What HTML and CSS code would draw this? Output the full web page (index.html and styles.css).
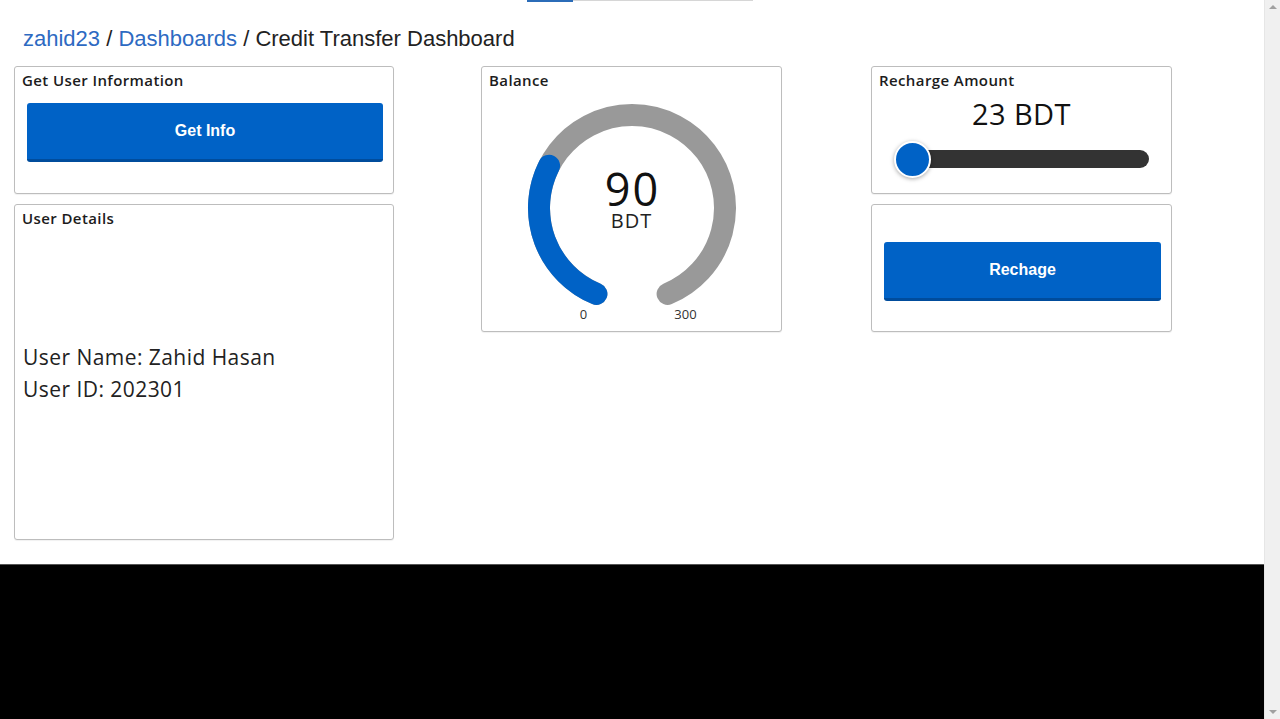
FILE: index.html
```html
<!DOCTYPE html>
<html lang="en">
<head>
<meta charset="utf-8">
<title>Credit Transfer Dashboard</title>
<link rel="stylesheet" href="styles.css">
</head>
<body>
<div class="screen">
  <div class="viewport">
    <div class="page">
      <div class="tabbar"><span class="tab tab-active"></span><span class="tab"></span></div>
      <nav class="crumbs"><a class="crumb-link">zahid23</a> / <a class="crumb-link">Dashboards</a> / <span class="crumb-current">Credit Transfer Dashboard</span></nav>
      <div class="grid">
        <div class="col col-wide">
          <section class="card card-short">
            <h2 class="card-title">Get User Information</h2>
            <button class="btn btn-info">Get Info</button>
          </section>
          <section class="card card-details">
            <h2 class="card-title">User Details</h2>
            <div class="details">
              <p>User Name: Zahid Hasan</p>
              <p>User ID: 202301</p>
            </div>
          </section>
        </div>
        <div class="col">
          <section class="card card-tall">
            <h2 class="card-title">Balance</h2>
            <div class="gauge">
              <svg class="gauge-svg" width="220" height="220" viewBox="0 0 220 220">
                <path d="M 74.4 195.9 A 93 93 0 1 1 145.6 195.9" fill="none" stroke="#999999" stroke-width="22" stroke-linecap="round"/>
                <path d="M 74.4 195.9 A 93 93 0 0 1 27.1 67.8" fill="none" stroke="#0062c6" stroke-width="22" stroke-linecap="round"/>
              </svg>
              <div class="gauge-value">
                <span class="gauge-num">90</span>
                <span class="gauge-unit">BDT</span>
              </div>
              <span class="gauge-min">0</span>
              <span class="gauge-max">300</span>
            </div>
          </section>
        </div>
        <div class="col col-last">
          <section class="card card-short">
            <h2 class="card-title">Recharge Amount</h2>
            <div class="amount">23 BDT</div>
            <div class="slider">
              <div class="slider-track"><span class="slider-thumb"></span></div>
            </div>
          </section>
          <section class="card card-short card-action">
            <button class="btn btn-recharge">Rechage</button>
          </section>
        </div>
      </div>
    </div>
    <div class="blackout"></div>
  </div>
  <div class="scrollbar">
    <span class="arrow arrow-up"></span>
    <span class="arrow arrow-down"></span>
  </div>
</div>
</body>
</html>
```
FILE: styles.css
```css
* { box-sizing: border-box; }
html, body { margin: 0; padding: 0; }
body {
  width: 1280px;
  height: 719px;
  overflow: hidden;
  font-family: "Open Sans", "Lato", sans-serif;
  color: #222;
  background: #000;
}
.screen { display: flex; width: 1280px; height: 719px; }
.viewport { width: 1264px; display: flex; flex-direction: column; }
.page { height: 564px; background: #fff; }
.blackout { flex: 1; background: #000; border-top: 1px solid #555; }

.tabbar { display: flex; margin-left: 527px; height: 2px; }
.tab { display: block; height: 1px; width: 180px; background: #d6d6d6; }
.tab-active { width: 46px; height: 2px; background: #2b6cb8; }

.crumbs {
  margin: 23px 0 0 23px;
  height: 28px;
  line-height: 28px;
  font-family: "Liberation Sans", Arial, sans-serif;
  font-size: 22px;
  color: #222;
}
.crumb-link { color: #2d6ac2; text-decoration: none; }
.crumb-current { color: #222; }

.grid { display: flex; margin-top: 13px; padding-left: 14px; gap: 87px; }
.col { display: flex; flex-direction: column; gap: 10px; width: 301px; }
.col-wide { width: 380px; }
.col-last { margin-left: 2px; }

.card {
  border: 1px solid #bdbdbd;
  border-radius: 3px;
  background: #fff;
  box-shadow: 0 1px 1px rgba(0,0,0,0.06);
  display: flex;
  flex-direction: column;
}
.card-short { height: 128px; }
.card-details { height: 336px; }
.card-tall { height: 266px; }

.card-title {
  margin: 0;
  padding: 3px 7px 0;
  height: 27px;
  line-height: 20px;
  font-size: 15px;
  letter-spacing: 0.4px;
  font-weight: 600;
  color: #1c1c1c;
}

.btn {
  border: none;
  border-bottom: 3px solid #004c9c;
  border-radius: 3px;
  background: #0062c6;
  color: #fff;
  font-family: "Liberation Sans", Arial, sans-serif;
  font-weight: 700;
  font-size: 16px;
  cursor: pointer;
}
.btn-info { margin: 9px 10px 0 12px; height: 59px; }
.card-action { justify-content: center; }
.btn-recharge { margin: 6px 10px 0 12px; height: 59px; }

.details { margin-top: 109px; padding-left: 8px; font-size: 21px; letter-spacing: 0.45px; color: #222; }
.details p { margin: 0; height: 32px; line-height: 32px; }

.gauge { position: relative; width: 220px; height: 236px; margin: 4px auto 0; }
.gauge-svg { display: block; }
.gauge-value {
  position: absolute;
  left: 0; right: 0; top: 73px;
  display: flex; flex-direction: column; align-items: center;
  color: #111;
}
.gauge-num { font-size: 45px; line-height: 36px; letter-spacing: 2px; padding-left: 2px; font-weight: 400; }
.gauge-unit { font-size: 20px; line-height: 20px; letter-spacing: 1px; margin-top: 4px; color: #222; }
.gauge-min, .gauge-max {
  position: absolute;
  top: 208px;
  font-size: 13px;
  line-height: 16px;
  color: #333;
  transform: translateX(-50%);
}
.gauge-min { left: 62px; }
.gauge-max { left: 164px; }

.amount { text-align: center; font-size: 29px; letter-spacing: 0.4px; line-height: 34px; color: #111; margin-top: 3px; }
.slider { padding: 19px 22px 0 23px; }
.slider-track { position: relative; height: 18px; border-radius: 9px; background: #333; }
.slider-thumb {
  position: absolute;
  left: -1px; top: -9px;
  width: 37px; height: 37px;
  border-radius: 50%;
  background: #0062c6;
  border: 2px solid #fff;
  box-shadow: 0 1px 4px rgba(0,0,0,0.35);
}

.scrollbar { position: relative; width: 16px; height: 719px; background: #f0f0f0; border-left: 1px solid #e6e6e6; }
.arrow { position: absolute; left: 4px; width: 0; height: 0; border-left: 4px solid transparent; border-right: 4px solid transparent; }
.arrow-up { top: 5px; border-bottom: 4px solid #a0a0a0; }
.arrow-down { bottom: 5px; border-top: 4px solid #a0a0a0; }
```
